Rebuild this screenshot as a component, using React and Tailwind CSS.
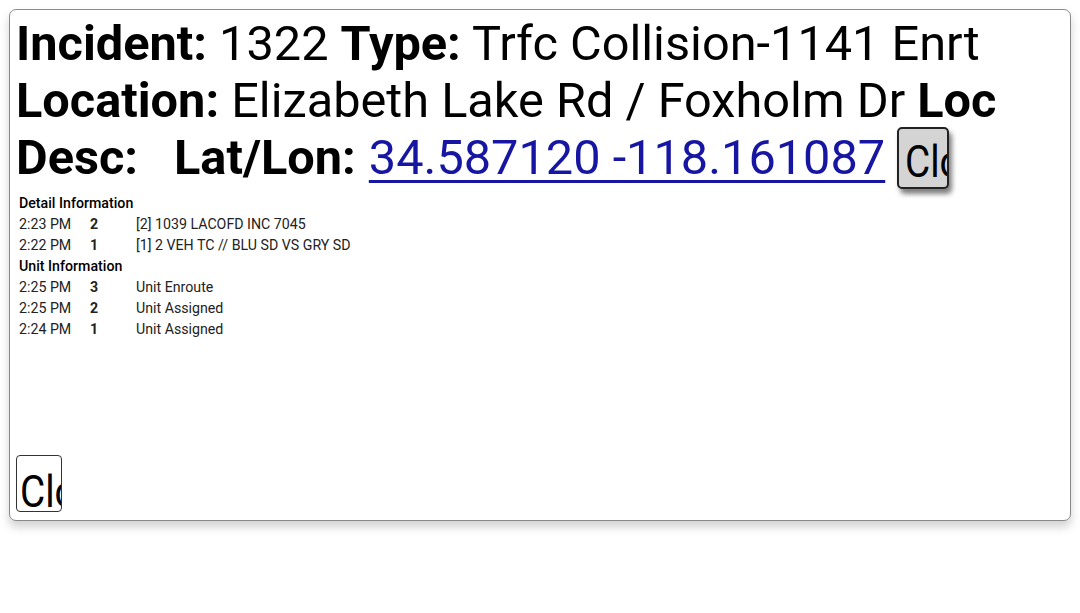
import React from "react";

const details = [
  { time: "2:23 PM", num: "2", text: "[2] 1039 LACOFD INC 7045" },
  { time: "2:22 PM", num: "1", text: "[1] 2 VEH TC // BLU SD VS GRY SD" },
];

const units = [
  { time: "2:25 PM", num: "3", text: "Unit Enroute" },
  { time: "2:25 PM", num: "2", text: "Unit Assigned" },
  { time: "2:24 PM", num: "1", text: "Unit Assigned" },
];

function Row({ row }) {
  return (
    <div className="flex">
      <span className="w-[71px]">{row.time}</span>
      <span className="w-[46px] font-bold">{row.num}</span>
      <span>{row.text}</span>
    </div>
  );
}

export default function App() {
  return (
    <div className="w-[1080px] h-[613px] bg-white font-['Roboto',sans-serif] text-black overflow-hidden">
      <div className="mx-[9px] mt-[9px] h-[512px] flex flex-col border border-[#8a8a8a] rounded-[7px] bg-white px-[6px] pt-[5px] pb-[6px] shadow-[0_6px_10px_rgba(0,0,0,0.18)]">
        <div className="text-[48.7px] leading-[57px] whitespace-nowrap">
          <div>
            <b>Incident:</b> 1322 <b>Type:</b> Trfc Collision-1141 Enrt
          </div>
          <div>
            <b>Location:</b> Elizabeth Lake Rd / Foxholm Dr <b>Loc</b>
          </div>
          <div className="flex items-center h-[57px]">
            <b>Desc:</b>
            <b className="ml-[36px]">Lat/Lon:</b>
            <a href="#" className="ml-[13px] text-[#1616a3] underline underline-offset-[6px] decoration-[3px]">
              34.587120 -118.161087
            </a>
            <button className="ml-[12px] shrink-0 w-[52px] h-[62px] overflow-hidden whitespace-nowrap bg-[#d4d4d4] border-2 border-[#222] rounded-[5px] text-left pl-[6px] pt-[8px] shadow-[3px_5px_5px_rgba(0,0,0,0.5)] text-[44px] leading-none">
              <span className="inline-block scale-x-[0.88] origin-left">Close</span>
            </button>
          </div>
        </div>
        <div className="mt-[7px] text-[14.2px] leading-[21px] pl-[3px] text-[#222]">
          <div className="font-medium text-black">Detail Information</div>
          {details.map((r, i) => (
            <Row key={i} row={r} />
          ))}
          <div className="font-medium text-black">Unit Information</div>
          {units.map((r, i) => (
            <Row key={i} row={r} />
          ))}
        </div>
        <div className="mt-auto">
          <button className="w-[46px] h-[57px] overflow-hidden whitespace-nowrap bg-white border border-[#333] rounded-[4px] text-left pl-[3px] pt-[14px] text-[44px] leading-none">
            <span className="inline-block scale-x-[0.88] origin-left">Close</span>
          </button>
        </div>
      </div>
    </div>
  );
}
